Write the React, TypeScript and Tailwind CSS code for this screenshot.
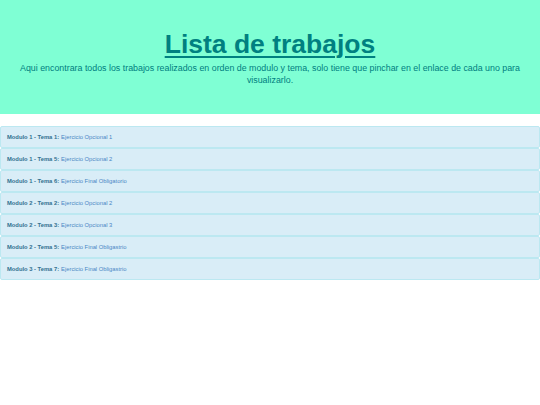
import React from 'react'

const TRABAJOS = [
  { label: 'Modulo 1 - Tema 1:', title: 'Ejercicio Opcional 1' },
  { label: 'Modulo 1 - Tema 5:', title: 'Ejercicio Opcional 2' },
  { label: 'Modulo 1 - Tema 6:', title: 'Ejercicio Final Obligatorio' },
  { label: 'Modulo 2 - Tema 2:', title: 'Ejercicio Opcional 2' },
  { label: 'Modulo 2 - Tema 3:', title: 'Ejercicio Opcional 3' },
  { label: 'Modulo 2 - Tema 5:', title: 'Ejercicio Final Obligastrio' },
  { label: 'Modulo 3 - Tema 7:', title: 'Ejercicio Final Obligastrio' },
]

const App: React.FC = () => {
  return (
    <div className="min-h-[405px] bg-white font-['Liberation_Sans',Arial,sans-serif]">
      <header className="bg-[#7fffd4] h-[114px] flex flex-col items-center pt-[29px] px-[12px] text-center">
        <h1 className="text-[26.5px] leading-[30px] font-bold text-[#008080] underline decoration-[2px] underline-offset-[3px]">
          Lista de trabajos
        </h1>
        <p className="mt-[3px] text-[8.85px] leading-[12px] text-[#008080]">
          Aqui encontrara todos los trabajos realizados en orden de modulo y tema, solo tiene que pinchar en el enlace de cada uno para visualizarlo.
        </p>
      </header>

      <ul className="mt-[12px]">
        {TRABAJOS.map((t, i) => (
          <li
            key={i}
            className="h-[22px] flex items-center px-[6px] bg-[#d9edf7] border border-[#bce8f1] rounded-[2px] text-[5.8px]"
          >
            <span className="font-bold text-[#31708f]">{t.label}</span>
            <a href="#" className="ml-[2px] text-[#4a86c5]">{t.title}</a>
          </li>
        ))}
      </ul>
    </div>
  )
}

export default App
